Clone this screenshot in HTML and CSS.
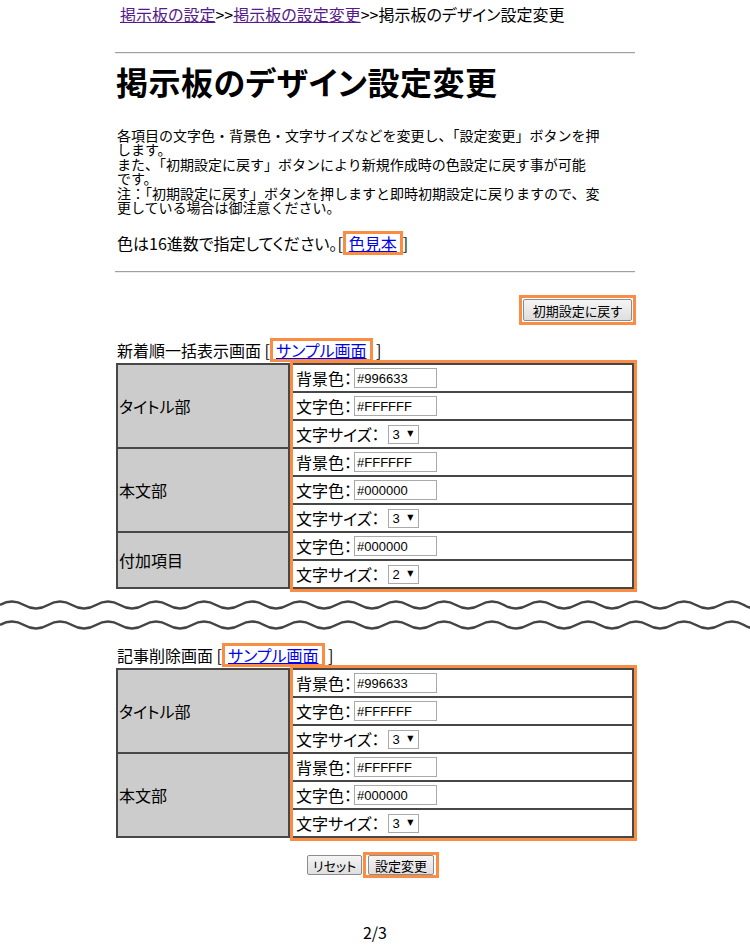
FILE: index.html
```html
<!DOCTYPE html>
<html lang="ja">
<head>
<meta charset="utf-8">
<title>掲示板のデザイン設定変更</title>
<link rel="stylesheet" href="styles.css">
</head>
<body>
<div class="col col-top">
  <div class="crumb"><a href="#" class="visited">掲示板の設定</a>&gt;&gt;<a href="#" class="visited">掲示板の設定変更</a>&gt;&gt;掲示板のデザイン設定変更</div>
  <hr class="rule rule-top">
  <h1 class="title">掲示板のデザイン設定変更</h1>
  <p class="desc">各項目の文字色・背景色・文字サイズなどを変更し、「設定変更」ボタンを押<br>します。<br>また、「初期設定に戻す」ボタンにより新規作成時の色設定に戻す事が可能<br>です。<br>注：「初期設定に戻す」ボタンを押しますと即時初期設定に戻りますので、変<br>更している場合は御注意ください。</p>
  <p class="note">色は16進数で指定してください。[<span class="hl hl-text"><a href="#">色見本</a></span>]</p>
  <hr class="rule rule-mid">
  <div class="init-row"><span class="hl hl-btn"><button type="button" class="btn btn-init">初期設定に戻す</button></span></div>

  <div class="caption caption-1"><span class="cap-text">新着順一括表示画面&nbsp;[</span><span class="hl hl-text"><a href="#">サンプル画面</a></span><span class="cap-text">&nbsp;]</span></div>
  <div class="table">
    <div class="heads">
      <div class="head span-3">タイトル部</div>
      <div class="head span-3">本文部</div>
      <div class="head span-2">付加項目</div>
    </div>
    <div class="fields">
      <div class="field">背景色：<input class="color" type="text" value="#996633"></div>
      <div class="field">文字色：<input class="color" type="text" value="#FFFFFF"></div>
      <div class="field">文字サイズ：<span class="sel"><select><option>3</option></select></span></div>
      <div class="field">背景色：<input class="color" type="text" value="#FFFFFF"></div>
      <div class="field">文字色：<input class="color" type="text" value="#000000"></div>
      <div class="field">文字サイズ：<span class="sel"><select><option>3</option></select></span></div>
      <div class="field">文字色：<input class="color" type="text" value="#000000"></div>
      <div class="field">文字サイズ：<span class="sel"><select><option>2</option></select></span></div>
    </div>
  </div>
</div>

<svg class="wave" width="750" height="44" viewBox="0 0 750 44" aria-hidden="true">
  <path d="M0 16 q12 -7 24 0 t24 0 t24 0 t24 0 t24 0 t24 0 t24 0 t24 0 t24 0 t24 0 t24 0 t24 0 t24 0 t24 0 t24 0 t24 0 t24 0 t24 0 t24 0 t24 0 t24 0 t24 0 t24 0 t24 0 t24 0 t24 0 t24 0 t24 0 t24 0 t24 0 t24 0 t24 0"/>
  <path d="M0 36 q12 -7 24 0 t24 0 t24 0 t24 0 t24 0 t24 0 t24 0 t24 0 t24 0 t24 0 t24 0 t24 0 t24 0 t24 0 t24 0 t24 0 t24 0 t24 0 t24 0 t24 0 t24 0 t24 0 t24 0 t24 0 t24 0 t24 0 t24 0 t24 0 t24 0 t24 0 t24 0 t24 0"/>
</svg>

<div class="col">
  <div class="caption caption-2"><span class="cap-text">記事削除画面&nbsp;[</span><span class="hl hl-text"><a href="#">サンプル画面</a></span><span class="cap-text">&nbsp;]</span></div>
  <div class="table">
    <div class="heads">
      <div class="head span-3">タイトル部</div>
      <div class="head span-3">本文部</div>
    </div>
    <div class="fields">
      <div class="field">背景色：<input class="color" type="text" value="#996633"></div>
      <div class="field">文字色：<input class="color" type="text" value="#FFFFFF"></div>
      <div class="field">文字サイズ：<span class="sel"><select><option>3</option></select></span></div>
      <div class="field">背景色：<input class="color" type="text" value="#FFFFFF"></div>
      <div class="field">文字色：<input class="color" type="text" value="#000000"></div>
      <div class="field">文字サイズ：<span class="sel"><select><option>3</option></select></span></div>
    </div>
  </div>
  <div class="actions">
    <button type="button" class="btn btn-reset">リセット</button>
    <span class="hl hl-submit"><button type="button" class="btn btn-submit">設定変更</button></span>
  </div>
  <div class="pager">2/3</div>
</div>
</body>
</html>
```

FILE: styles.css
```css
* { box-sizing: border-box; }

body {
  margin: 0;
  background: #ffffff;
  color: #000000;
  font-family: "Noto Sans CJK JP", "Noto Sans", sans-serif;
  font-size: 16px;
  font-feature-settings: "palt";
}

.col {
  width: 520px;
  margin: 0 auto;
}

.col-top { padding-top: 4px; }

a { color: #0000ee; text-decoration: underline; }
a.visited { color: #551a8b; }

.crumb {
  line-height: 20px;
  padding-left: 5px;
}

.rule {
  border: 0;
  border-top: 1px solid #9f9f9f;
  border-bottom: 1px solid #ececec;
  height: 0;
  margin: 0;
}
.rule-top { margin-top: 28px; }
.rule-mid { margin-top: 16px; }

.title {
  margin: 7px 0 0;
  padding-left: 1px;
  font-size: 32px;
  line-height: 40px;
  font-weight: bold;
  letter-spacing: 0.5px;
}

.desc {
  margin: 27px 0 0;
  padding-left: 2px;
  font-size: 14px;
  font-feature-settings: normal;
  line-height: 14.4px;
}

.note {
  margin: 17px 0 0;
  padding-left: 2px;
  line-height: 24px;
}

.hl {
  display: inline-block;
  border: 3px solid #fb8c44;
}
.hl-text {
  line-height: 18px;
  padding: 0 3px;
}

.init-row {
  margin: 22px -1px 0 0;
  display: flex;
  justify-content: flex-end;
}
.hl-btn { padding: 1px; }

.btn {
  display: block;
  margin: 0;
  padding: 0;
  font-family: inherit;
  font-feature-settings: "palt";
  font-size: 13px;
  line-height: 1;
  color: #000;
  background: linear-gradient(#f5f5f5, #dedede);
  border: 1px solid #8c8c8c;
  border-radius: 2px;
}
.btn-init { width: 109px; height: 22px; }
.btn-reset { width: 55px; height: 20px; }
.btn-submit { width: 66px; height: 20px; }

.caption {
  display: flex;
  align-items: flex-start;
  height: 25px;
  padding-left: 2px;
}
.caption-1 { margin-top: 13px; }
.caption-2 { margin-top: 10px; }
.cap-text { line-height: 24px; }

.table {
  display: flex;
  gap: 2px;
  padding: 2px;
  margin-left: 1px;
  width: 518px;
  background: #474747;
}

.heads {
  width: 170px;
  display: flex;
  flex-direction: column;
  gap: 2px;
}

.head {
  background: #cccccc;
  display: flex;
  align-items: center;
  padding-left: 1px;
}
.span-3 { height: 82px; }
.span-2 { height: 54px; }

.fields {
  flex: 1;
  display: flex;
  flex-direction: column;
  gap: 2px;
  position: relative;
}
.fields::after {
  content: "";
  position: absolute;
  top: -5px;
  right: -5px;
  bottom: -5px;
  left: 0;
  border: 3px solid #fb8c44;
  pointer-events: none;
}

.field {
  height: 26px;
  background: #ffffff;
  display: flex;
  align-items: center;
  padding-left: 6px;
  line-height: 1;
}

.color {
  width: 83px;
  height: 20px;
  margin: 0 0 0 2px;
  padding: 0 2px;
  border: 1px solid #a9a9a9;
  font-family: "Liberation Sans", Arial, sans-serif;
  font-size: 13px;
  color: #000;
  background: #fff;
}

.sel {
  position: relative;
  display: inline-block;
  margin-left: 8px;
}
.sel select {
  display: block;
  appearance: none;
  -webkit-appearance: none;
  width: 31px;
  height: 19px;
  margin: 0;
  padding: 0 0 0 4px;
  border: 1px solid #a9a9a9;
  border-radius: 0;
  background: #fff;
  font-family: "Liberation Sans", Arial, sans-serif;
  font-size: 13px;
  color: #000;
}
.sel::after {
  content: "\25BC";
  position: absolute;
  right: 5px;
  top: 5px;
  font-family: "DejaVu Sans", sans-serif;
  font-size: 8px;
  line-height: 1;
  pointer-events: none;
}

.wave {
  display: block;
  fill: none;
  stroke: #444444;
  stroke-width: 2.5;
}

.actions {
  margin-top: 14px;
  height: 26px;
  display: flex;
  justify-content: center;
  align-items: center;
  gap: 1px;
  padding-right: 4px;
}
.hl-submit { padding: 0 2px; }

.pager {
  margin-top: 44px;
  line-height: 20px;
  text-align: center;
}
```
